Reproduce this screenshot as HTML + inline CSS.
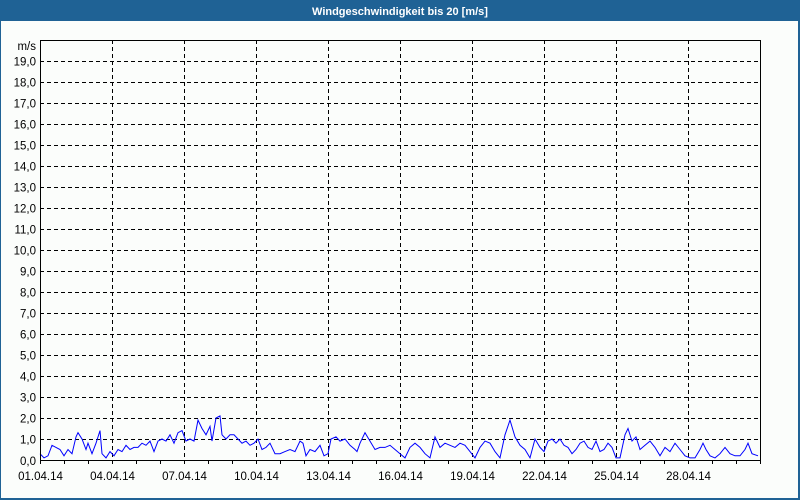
<!DOCTYPE html>
<html><head><meta charset="utf-8"><style>
html,body{margin:0;padding:0;width:800px;height:500px;overflow:hidden;background:#1f6295;}
svg{display:block}
</style></head><body>
<svg id="s" width="800" height="500" xmlns="http://www.w3.org/2000/svg" font-family="Liberation Sans, sans-serif" font-size="11">
<rect x="0" y="0" width="800" height="500" fill="#1f6295"/>
<rect x="1" y="21" width="797" height="477" fill="#fbfdfb"/>
<text x="400" y="15" fill="#ffffff" font-weight="bold" text-anchor="middle">Windgeschwindigkeit bis 20 [m/s]</text>
<g id="g" font-size="11.5"></g>
</svg>
<script>
var g=document.getElementById('g'),h='';
for(var i=1;i<=19;i++){var y=460-i*21+0.5;h+='<line x1="40" x2="760" y1="'+y+'" y2="'+y+'" stroke="#000" stroke-dasharray="4,3"/>';
h+='<text x="36" y="'+(y+4)+'" text-anchor="end" fill="#000">'+i+',0</text>';}
h+='<text x="36" y="465" text-anchor="end" fill="#000">0,0</text>';
h+='<text x="36" y="50" text-anchor="end" fill="#000">m/s</text>';
var labels=['01.04.14','04.04.14','07.04.14','10.04.14','13.04.14','16.04.14','19.04.14','22.04.14','25.04.14','28.04.14'];
for(var k=0;k<10;k++){var x=40+k*72+0.5;
 if(k>0)h+='<line x1="'+x+'" x2="'+x+'" y1="40" y2="460" stroke="#000" stroke-dasharray="4,3"/>';
 h+='<text x="'+x+'" y="480" text-anchor="middle" fill="#000">'+labels[k]+'</text>';}
for(var d=0;d<=30;d++){var x=40+d*24+0.5;h+='<line x1="'+x+'" x2="'+x+'" y1="460" y2="464" stroke="#000"/>';}
var pts=[[40,.3],[44,.1],[48,.2],[52,.7],[56,.6],[60,.5],[64,.2],[68,.5],[72,.3],[76,1.1],[78,1.3],[82,1.0],[86,.5],[88,.8],[92,.3],[96,.8],[100,1.4],[102,.3],[106,.1],[110,.4],[114,.2],[118,.5],[122,.4],[126,.7],[130,.5],[134,.6],[138,.6],[142,.8],[146,.7],[150,.9],[154,.4],[158,.9],[162,1.0],[166,.9],[170,1.2],[174,.8],[178,1.3],[182,1.4],[186,.9],[190,1.0],[194,.9],[198,1.9],[202,1.5],[206,1.2],[210,1.6],[212,.9],[216,2.0],[220,2.1],[222,1.2],[226,1.0],[230,1.2],[234,1.2],[238,1.0],[242,.8],[246,.9],
[250,.7],[254,.8],[258,1.0],[262,.5],[266,.6],[270,.8],[275,.3],[280,.3],[285,.4],[290,.5],[295,.4],[300,.9],[303,.8],[306,.2],[310,.5],[315,.4],[320,.7],[324,.2],[328,.3],[331,1.0],[336,1.1],[340,.9],[345,1.0],[350,.7],[355,.5],[357,.4],[360,.8],[365,1.3],[370,.9],
[375,.5],[380,.6],[385,.6],[390,.7],[395,.5],[400,.3],[405,.1],[410,.6],[415,.8],[420,.6],[425,.3],[430,.1],[435,1.1],[440,.6],[445,.8],[450,.7],[455,.6],[460,.8],[465,.7],[470,.4],[475,.1],[480,.6],[485,.9],[490,.8],[495,.4],[500,.1],[505,1.2],[510,1.9],[515,1.1],[520,.7],[525,.5],[530,.1],[535,1.0],[540,.6],
[544,.4],[548,.9],[552,1.0],[556,.8],[560,1.0],[564,.7],[568,.6],[572,.3],[576,.5],[580,.8],[584,.9],[588,.6],[592,.5],[596,.9],[600,.4],[604,.5],[608,.8],[612,.6],[616,.1],[620,.1],[625,1.2],[628,1.5],[632,.9],[636,1.1],[640,.5],[645,.7],[650,.9],[655,.6],[660,.2],[665,.6],[670,.4],[675,.8],[680,.5],[685,.2],[690,.1],[695,.1],[700,.5],[703,.8],[706,.5],[710,.2],[715,.1],[720,.3],[725,.6],[730,.3],[735,.2],[740,.2],[745,.5],[748,.8],[752,.3],[758,.2]];
var p=pts.map(function(a){return a[0]+','+(460-a[1]*21).toFixed(1)}).join(' ');
h+='<polyline points="'+p+'" fill="none" stroke="#0000ff" stroke-width="1"/>';
h+='<rect x="40.5" y="40.5" width="720" height="420" fill="none" stroke="#000"/>';
g.innerHTML=h;
</script>
</body></html>
